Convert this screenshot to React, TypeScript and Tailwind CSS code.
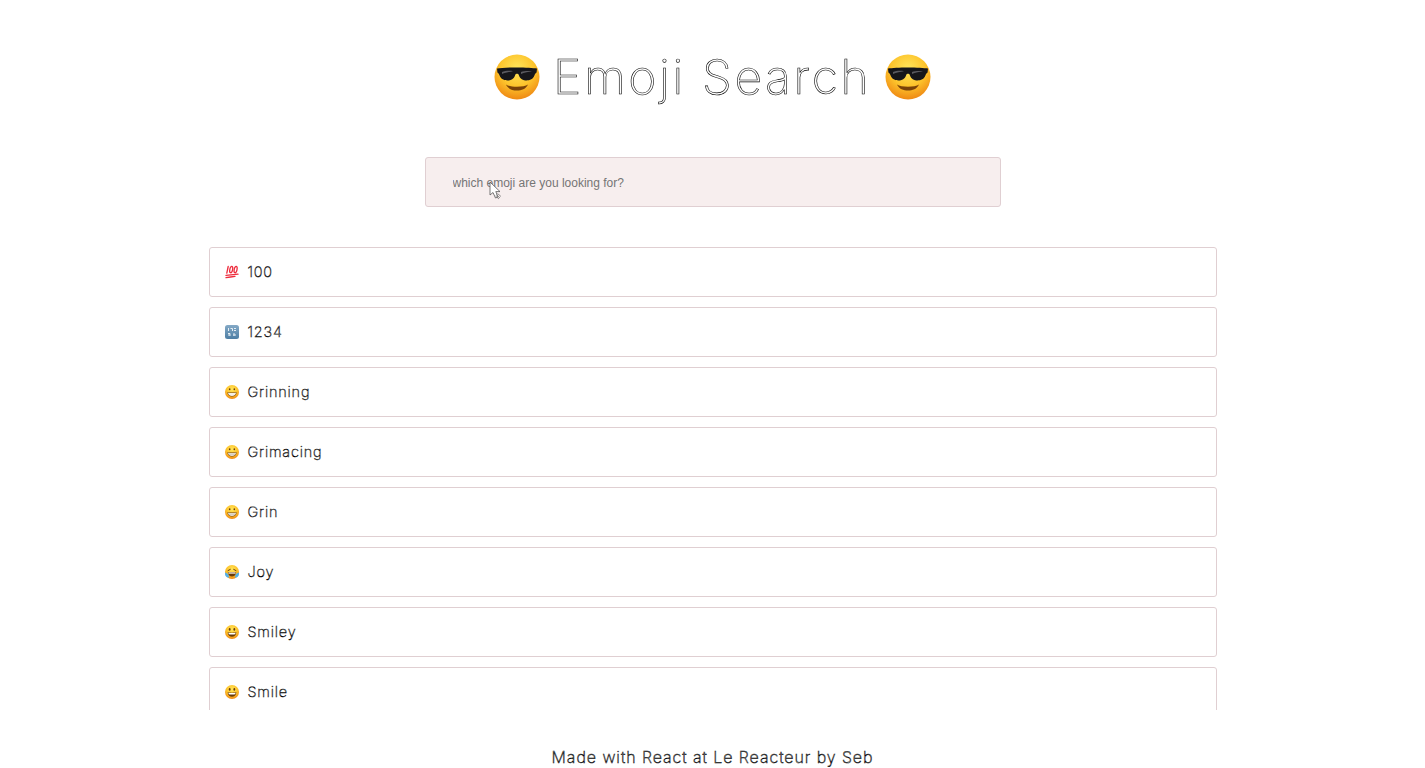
import React from "react";

type Kind = "grinning" | "grimacing" | "grin" | "joy" | "smiley" | "smile";

const Defs = ({ id }: { id: string }) => (
  <defs>
    <radialGradient id={id} cx="50%" cy="32%" r="70%">
      <stop offset="0%" stopColor="#ffe65c" />
      <stop offset="55%" stopColor="#fdc42c" />
      <stop offset="100%" stopColor="#ee8512" />
    </radialGradient>
  </defs>
);

const Cool = () => (
  <svg width="46" height="46" viewBox="0 0 46 46" className="shrink-0">
    <Defs id="cool" />
    <circle cx="23" cy="23" r="22.5" fill="url(#cool)" />
    <path d="M3 14.5C10 13 36 13 43 14.5L42.6 18.5C41.5 19 41 20 40.4 21.5C39 25.5 35.5 26.6 31.5 26.4C27.5 26.2 25.5 23.5 24.6 20.5C24.2 19.4 21.8 19.4 21.4 20.5C20.5 23.5 18.5 26.2 14.5 26.4C10.5 26.6 7 25.5 5.6 21.5C5 20 4.5 19 3.4 18.5Z" fill="#16161a" />
    <path d="M8 18C11 16.7 16 16.6 19 17.2C16 17.8 11 18.5 8 20Z" fill="#5a5a60" />
    <path d="M27 18C30 16.8 35 16.7 38 17.3C35 17.8 30 18.5 27 20Z" fill="#5a5a60" />
    <path d="M12 30.5C16 33.5 30 33.5 34 30.5C32 35 27.5 36.5 23 36.5C18.5 36.5 14 35 12 30.5Z" fill="#7a4208" />
  </svg>
);

const Hundred = () => (
  <svg width="14" height="14" viewBox="0 0 14 14" className="shrink-0">
    <g fill="none" stroke="#ee2b3c" strokeWidth="1.3" strokeLinecap="round">
      <path d="M3.2 1.5L1.8 8.2" />
      <ellipse cx="6.2" cy="4.6" rx="1.4" ry="3.2" transform="rotate(12 6.2 4.6)" />
      <ellipse cx="10.6" cy="4.6" rx="1.4" ry="3.2" transform="rotate(12 10.6 4.6)" />
      <path d="M1 10.4C5 10 9 9.6 13 9.2" />
      <path d="M1 12.6C4 12.2 7 11.8 10 11.4" />
    </g>
  </svg>
);

const Numbers = () => (
  <svg width="14" height="14" viewBox="0 0 14 14" className="shrink-0">
    <defs>
      <linearGradient id="num" x1="0" y1="0" x2="0" y2="1">
        <stop offset="0%" stopColor="#84a9c6" />
        <stop offset="100%" stopColor="#4d7ea4" />
      </linearGradient>
    </defs>
    <rect width="14" height="14" rx="2.5" fill="url(#num)" />
    <g stroke="#e6eef4" strokeWidth="1">
      <path d="M3.5 3V6M5.5 3.5H7.5V6M9 3.5H11M9 5.5H11M3 8.5H5V11M3 10H5M9 8V11M8 10H11" fill="none" />
    </g>
  </svg>
);

const Face = ({ kind }: { kind: Kind }) => {
  const id = `face-${kind}`;
  const teeth = kind === "grimacing" || kind === "grin" || kind === "grinning";
  return (
    <svg width="14" height="14" viewBox="0 0 14 14" className="shrink-0">
      <Defs id={id} />
      <circle cx="7" cy="7" r="7" fill={`url(#${id})`} />
      {kind === "joy" ? (
        <>
          <path d="M3 5.6L5.3 4.4M11 5.6L8.7 4.4" stroke="#6b3b07" strokeWidth="1" strokeLinecap="round" />
          <path d="M2.8 7H11.2C11 10 9 11.6 7 11.6C5 11.6 3 10 2.8 7Z" fill="#6b3b07" />
          <path d="M3.4 7.4H10.6V8.6H3.4Z" fill="#fff" />
          <path d="M0 7.6C1.8 7.8 3.8 9.2 4.2 12.2C2.2 13.6 -0.4 11.4 0 7.6Z" fill="#4fb0ec" />
          <path d="M14 7.6C12.2 7.8 10.2 9.2 9.8 12.2C11.8 13.6 14.4 11.4 14 7.6Z" fill="#4fb0ec" />
        </>
      ) : teeth ? (
        <>
          <ellipse cx="4.7" cy="4.2" rx="0.8" ry="1" fill="#6b3b07" />
          <ellipse cx="9.3" cy="4.2" rx="0.8" ry="1" fill="#6b3b07" />
          <path d="M2.4 7.2C5 7.7 9 7.7 11.6 7.2C11.6 9.8 9.6 11.4 7 11.4C4.4 11.4 2.4 9.8 2.4 7.2Z" fill="#6b3b07" />
          <path d="M3 7.7C5.2 8.1 8.8 8.1 11 7.7C11 9.4 9.4 10.9 7 10.9C4.6 10.9 3 9.4 3 7.7Z" fill="#f5f0e6" />
          {kind !== "grinning" && <path d="M3 9.2H11M5 7.9V10.6M7 8V10.9M9 7.9V10.6" stroke="#a89a80" strokeWidth="0.35" />}
        </>
      ) : (
        <>
          <ellipse cx="4.7" cy="4.4" rx="0.9" ry="1.3" fill="#6b3b07" />
          <ellipse cx="9.3" cy="4.4" rx="0.9" ry="1.3" fill="#6b3b07" />
          <path d="M2.6 7.2C5 7.8 9 7.8 11.4 7.2C11.2 10.4 9 11.8 7 11.8C5 11.8 2.8 10.4 2.6 7.2Z" fill="#6b3b07" />
          <path d="M3.4 7.7C5.5 8.2 8.5 8.2 10.6 7.7L10.2 9.2C8.5 9.6 5.5 9.6 3.8 9.2Z" fill="#fff" />
        </>
      )}
    </svg>
  );
};

const rows: { name: string; icon: React.ReactNode }[] = [
  { name: "100", icon: <Hundred /> },
  { name: "1234", icon: <Numbers /> },
  { name: "Grinning", icon: <Face kind="grinning" /> },
  { name: "Grimacing", icon: <Face kind="grimacing" /> },
  { name: "Grin", icon: <Face kind="grin" /> },
  { name: "Joy", icon: <Face kind="joy" /> },
  { name: "Smiley", icon: <Face kind="smiley" /> },
  { name: "Smile", icon: <Face kind="smile" /> },
];

const App = () => {
  return (
    <div className="relative flex h-[768px] flex-col items-center overflow-hidden bg-white font-['Inter',sans-serif]">
      <header className="flex h-[157px] w-full items-start justify-center pt-[54px]">
        <div className="flex h-[46px] items-center gap-[13px]">
          <Cool />
          <h1 className="text-[48px] leading-[46px] font-extralight tracking-[2.6px] text-transparent will-change-transform [-webkit-text-stroke:0.6px_#000]">
            Emoji Search
          </h1>
          <Cool />
        </div>
      </header>

      <input
        type="text"
        placeholder="which emoji are you looking for?"
        className="h-[50px] w-[576px] shrink-0 rounded-[3px] border border-[#e0cfd2] bg-[#f7eeee] pt-[2px] pl-[27px] font-['Liberation_Sans',sans-serif] text-[12px] outline-none placeholder:text-[#757575]"
      />

      <ul className="mt-10 flex h-[463px] w-[1008px] shrink-0 flex-col gap-[10px] overflow-hidden">
        {rows.map((row) => (
          <li
            key={row.name}
            className="flex h-[50px] shrink-0 items-center gap-[9px] rounded-[3px] border border-[#e0cfd2] pl-[15px]"
          >
            {row.icon}
            <span className="-mt-px text-[14.5px] font-extralight tracking-[0.8px] text-transparent [-webkit-text-stroke:0.45px_#000]">
              {row.name}
            </span>
          </li>
        ))}
      </ul>

      <footer className="mt-[37px] text-[16px] leading-5 font-extralight tracking-[0.95px] text-transparent [-webkit-text-stroke:0.5px_#000]">
        Made with React at Le Reacteur by Seb
      </footer>

      <svg width="13" height="19" viewBox="0 0 13 19" className="absolute top-[181px] left-[489px]">
        <path d="M1 1V14L4 11.5L6.5 17L9 16L6.8 10.6H11Z" fill="#fff" stroke="#555" strokeWidth="0.8" strokeLinejoin="round" />
        <path d="M7 13.5L11 17M8.5 12.5L12 15.5M6.5 15L10 18" stroke="#777" strokeWidth="0.8" />
      </svg>
    </div>
  );
};

export default App;
